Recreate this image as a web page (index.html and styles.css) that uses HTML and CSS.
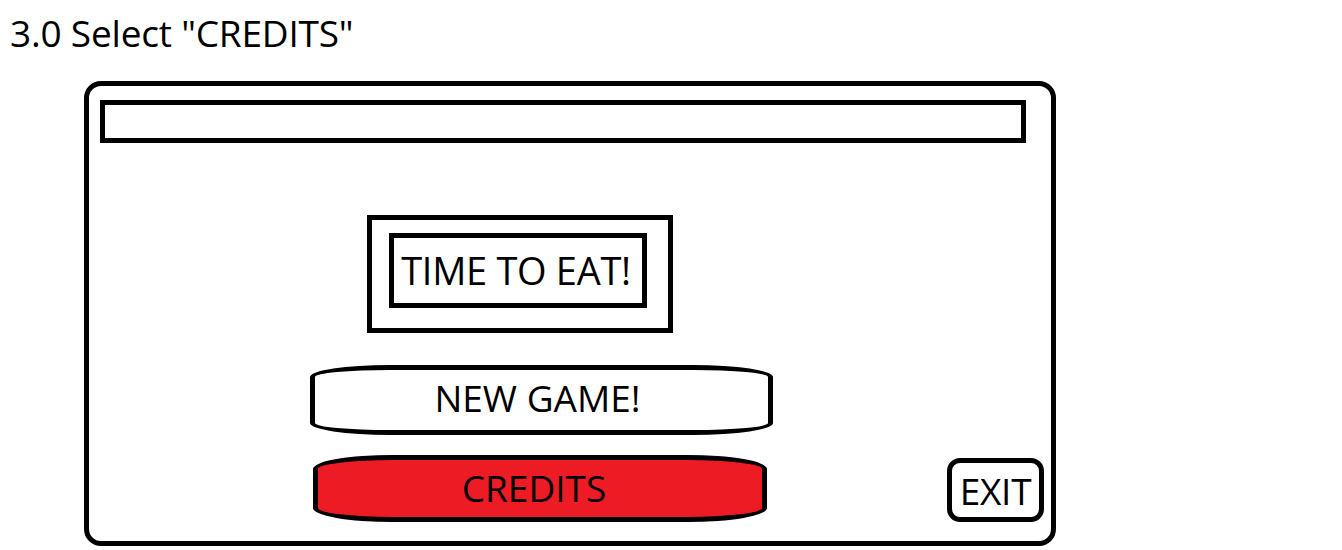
FILE: index.html
```html
<!doctype html>
<html lang="en">
<head>
  <title>3.0 Select CREDITS</title>
  <meta charset="utf-8">
  <link rel="stylesheet" href="styles.css">
</head>
<body>
<h1 class="stepTitle">3.0 Select "CREDITS"</h1>

<div class="screen">
  <div class="topBar"></div>

  <div class="logoBox">
    <div class="logoInner">TIME TO EAT!</div>
  </div>

  <div class="menuButton newGameButton">NEW GAME!</div>

  <div class="bottomRow">
    <div class="menuButton creditsButton">CREDITS</div>
    <div class="exitButton">EXIT</div>
  </div>
</div>
</body>
</html>
```

FILE: styles.css
```css
body {
  margin: 0;
  font-family: "Open Sans", "Noto Sans", sans-serif;
  color: black;
  background: white;
}

.stepTitle {
  margin: 0;
  padding: 11px 0 0 10px;
  height: 81px;
  box-sizing: border-box;
  font-size: 37px;
  font-weight: normal;
  line-height: 44px;
  letter-spacing: -0.2px;
}

.screen {
  margin-left: 84px;
  width: 972px;
  height: 465px;
  box-sizing: border-box;
  border: 5px solid black;
  border-radius: 17px;
}

.topBar {
  margin: 14px 0 0 11px;
  width: 926px;
  height: 43px;
  box-sizing: border-box;
  border: 5px solid black;
}

.logoBox {
  margin: 72px 0 0 278px;
  width: 306px;
  height: 118px;
  box-sizing: border-box;
  border: 5px solid black;
  padding: 13px 0 0 17px;
}

.logoInner {
  width: 258px;
  height: 75px;
  box-sizing: border-box;
  border: 5px solid black;
  display: flex;
  align-items: center;
  justify-content: center;
  padding: 0 4px 2px 0;
  font-size: 38px;
  letter-spacing: -0.3px;
  white-space: nowrap;
}

.menuButton {
  box-sizing: border-box;
  border: 5px solid black;
  display: flex;
  align-items: center;
  justify-content: center;
  font-size: 37px;
}

.newGameButton {
  margin: 32px 0 0 221px;
  width: 463px;
  height: 70px;
  padding: 0 8px 6px 0;
  border-radius: 80px / 12px;
}

.bottomRow {
  margin: 20px 0 0 224px;
  display: flex;
  align-items: flex-start;
  gap: 180px;
}

.creditsButton {
  width: 454px;
  height: 67px;
  padding: 0 12px 3px 0;
  background: #ed1c24;
  border-radius: 80px / 14px;
}

.exitButton {
  margin-top: 3px;
  width: 97px;
  height: 64px;
  box-sizing: border-box;
  border: 5px solid black;
  border-radius: 13px;
  display: flex;
  align-items: center;
  justify-content: center;
  font-size: 37px;
  letter-spacing: -0.3px;
}
```
